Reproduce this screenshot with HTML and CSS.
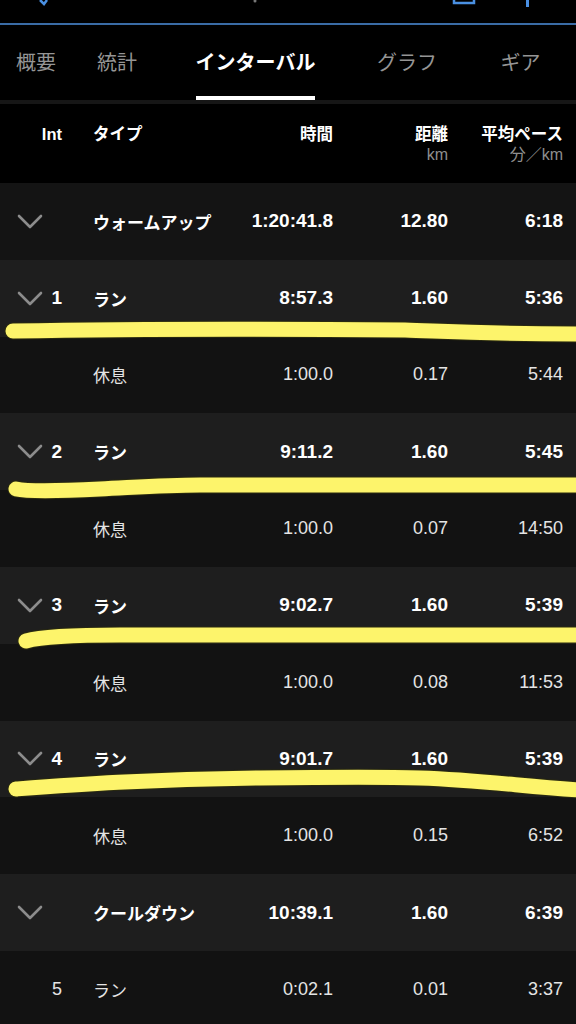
FILE: index.html
```html
<!DOCTYPE html>
<html lang="ja">
<head>
<meta charset="utf-8">
<title>インターバル</title>
<link rel="stylesheet" href="styles.css">
</head>
<body>
<div class="screen">
  <div class="topbar">
    <svg class="topicons" width="576" height="23" viewBox="0 0 576 23">
      <path d="M40 0 L44 4 L47 0" fill="none" stroke="#4a90e2" stroke-width="2.5"/>
      <circle cx="255" cy="1" r="1.5" fill="#777"/>
      <path d="M454 0 V3 H474 V0" fill="none" stroke="#4a90e2" stroke-width="2.5"/>
      <rect x="526" y="0" width="3" height="7" fill="#4a90e2"/>
    </svg>
  </div>

  <nav class="tabs">
    <div class="tab"><span class="tab-label">概要</span></div>
    <div class="tab"><span class="tab-label">統計</span></div>
    <div class="tab"><span class="tab-label active">インターバル</span></div>
    <div class="tab"><span class="tab-label">グラフ</span></div>
    <div class="tab"><span class="tab-label">ギア</span></div>
  </nav>

  <div class="table">
    <div class="row head">
      <div class="lead"><span class="int">Int</span></div>
      <div class="type">タイプ</div>
      <div class="num">時間</div>
      <div class="num">距離<small>km</small></div>
      <div class="num">平均ペース<small>分／km</small></div>
    </div>

    <div class="row main warm">
      <div class="lead"><svg class="chev" viewBox="0 0 26 15"><polyline points="2,2 13,13 24,2"/></svg></div>
      <div class="type">ウォームアップ</div>
      <div class="num">1:20:41.8</div>
      <div class="num">12.80</div>
      <div class="num">6:18</div>
    </div>

    <div class="row main">
      <div class="lead"><svg class="chev" viewBox="0 0 26 15"><polyline points="2,2 13,13 24,2"/></svg><span class="int">1</span></div>
      <div class="type">ラン</div>
      <div class="num">8:57.3</div>
      <div class="num">1.60</div>
      <div class="num">5:36</div>
    </div>
    <div class="row rest">
      <div class="lead"></div>
      <div class="type">休息</div>
      <div class="num">1:00.0</div>
      <div class="num">0.17</div>
      <div class="num">5:44</div>
    </div>

    <div class="row main">
      <div class="lead"><svg class="chev" viewBox="0 0 26 15"><polyline points="2,2 13,13 24,2"/></svg><span class="int">2</span></div>
      <div class="type">ラン</div>
      <div class="num">9:11.2</div>
      <div class="num">1.60</div>
      <div class="num">5:45</div>
    </div>
    <div class="row rest">
      <div class="lead"></div>
      <div class="type">休息</div>
      <div class="num">1:00.0</div>
      <div class="num">0.07</div>
      <div class="num">14:50</div>
    </div>

    <div class="row main">
      <div class="lead"><svg class="chev" viewBox="0 0 26 15"><polyline points="2,2 13,13 24,2"/></svg><span class="int">3</span></div>
      <div class="type">ラン</div>
      <div class="num">9:02.7</div>
      <div class="num">1.60</div>
      <div class="num">5:39</div>
    </div>
    <div class="row rest">
      <div class="lead"></div>
      <div class="type">休息</div>
      <div class="num">1:00.0</div>
      <div class="num">0.08</div>
      <div class="num">11:53</div>
    </div>

    <div class="row main">
      <div class="lead"><svg class="chev" viewBox="0 0 26 15"><polyline points="2,2 13,13 24,2"/></svg><span class="int">4</span></div>
      <div class="type">ラン</div>
      <div class="num">9:01.7</div>
      <div class="num">1.60</div>
      <div class="num">5:39</div>
    </div>
    <div class="row rest">
      <div class="lead"></div>
      <div class="type">休息</div>
      <div class="num">1:00.0</div>
      <div class="num">0.15</div>
      <div class="num">6:52</div>
    </div>

    <div class="row main">
      <div class="lead"><svg class="chev" viewBox="0 0 26 15"><polyline points="2,2 13,13 24,2"/></svg></div>
      <div class="type">クールダウン</div>
      <div class="num">10:39.1</div>
      <div class="num">1.60</div>
      <div class="num">6:39</div>
    </div>
    <div class="row rest">
      <div class="lead"><span class="int">5</span></div>
      <div class="type">ラン</div>
      <div class="num">0:02.1</div>
      <div class="num">0.01</div>
      <div class="num">3:37</div>
    </div>
  </div>

  <svg class="marks" width="576" height="1024" viewBox="0 0 576 1024">
    <g class="mark-edge">
      <path d="M13,331 C120,329 300,329 405,330 C440,331 480,334 580,334"/>
      <path d="M16,489 C30,492 60,491 100,489 C140,487 165,485 200,485 L580,485"/>
      <path d="M26,641 C40,637 70,635 120,635 L580,635"/>
      <path d="M16,789 C70,785 150,779 260,778 C340,777 390,777 420,778 C480,780 520,786 580,790"/>
    </g>
    <g class="mark">
      <path d="M13,331 C120,329 300,329 405,330 C440,331 480,334 580,334"/>
      <path d="M16,489 C30,492 60,491 100,489 C140,487 165,485 200,485 L580,485"/>
      <path d="M26,641 C40,637 70,635 120,635 L580,635"/>
      <path d="M16,789 C70,785 150,779 260,778 C340,777 390,777 420,778 C480,780 520,786 580,790"/>
    </g>
  </svg>
</div>
</body>
</html>
```

FILE: styles.css
```css
* {
  box-sizing: border-box;
}

html, body {
  margin: 0;
  padding: 0;
  background: #000;
}

body {
  font-family: "Liberation Sans", "Noto Sans CJK JP", sans-serif;
  color: #fff;
}

.screen {
  position: relative;
  width: 576px;
  height: 1024px;
  overflow: hidden;
  background: #000;
}

/* top navigation strip (cropped) */
.topbar {
  height: 25px;
  border-bottom: 2px solid #3a6ca6;
  background: #000;
}

.topicons {
  display: block;
}

/* tabs */
.tabs {
  display: grid;
  grid-template-columns: 72px 90px 187px 116px 111px;
  height: 79px;
  border-bottom: 4px solid #161616;
}

.tab {
  display: flex;
  justify-content: center;
  align-items: flex-end;
}

.tab-label {
  font-family: "Noto Sans CJK JP", sans-serif;
  font-size: 20px;
  line-height: 24px;
  color: #959595;
  padding-bottom: 22px;
  border-bottom: 4px solid transparent;
  white-space: nowrap;
}

.tab-label.active {
  color: #fff;
  font-weight: 700;
  border-bottom-color: #fff;
}

/* table */
.row {
  display: grid;
  grid-template-columns: 62px 171px 100px 115px 115px;
  padding-right: 13px;
  height: 76.8px;
  align-items: center;
}

.lead {
  display: flex;
  align-items: center;
  justify-content: flex-end;
  padding-left: 17px;
  height: 100%;
}

.chev {
  width: 26px;
  height: 15px;
  margin-right: auto;
  fill: none;
  stroke: #8c8c8c;
  stroke-width: 2.6;
  stroke-linecap: round;
  stroke-linejoin: round;
}

.int {
  font-size: 19px;
  font-weight: 700;
  white-space: nowrap;
}

.type {
  padding-left: 31px;
  font-family: "Noto Sans CJK JP", sans-serif;
  font-size: 17px;
  font-weight: 700;
  white-space: nowrap;
}

.num {
  text-align: right;
  font-size: 19px;
  font-weight: 700;
  white-space: nowrap;
}

.head {
  height: 79px;
  align-items: start;
  padding-top: 20px;
  background: #000;
}

.head .int,
.head .type,
.head .num {
  font-family: "Liberation Sans", "Noto Sans CJK JP", sans-serif;
  font-size: 16.5px;
  line-height: 20px;
  font-weight: 700;
}

.head .lead {
  align-items: flex-start;
  height: auto;
}

.head small {
  display: block;
  font-size: 16px;
  line-height: 22px;
  font-weight: 400;
  color: #8e8e8e;
}

.main {
  background: #1e1e1e;
}

.main.warm {
  background: #141414;
}

.rest {
  background: #121212;
}

.rest .type,
.rest .num,
.rest .int {
  font-weight: 400;
  color: #e4e4e4;
}

.rest .num,
.rest .int {
  font-size: 18px;
}

/* hand-drawn highlighter marks over the screenshot */
.marks {
  position: absolute;
  top: 0;
  left: 0;
  pointer-events: none;
}

.marks path {
  fill: none;
  stroke-linecap: round;
  stroke-linejoin: round;
}

.mark-edge path {
  stroke: #2a2a10;
  stroke-width: 17;
}

.mark path {
  stroke: #fdf46b;
  stroke-width: 15;
}
```
